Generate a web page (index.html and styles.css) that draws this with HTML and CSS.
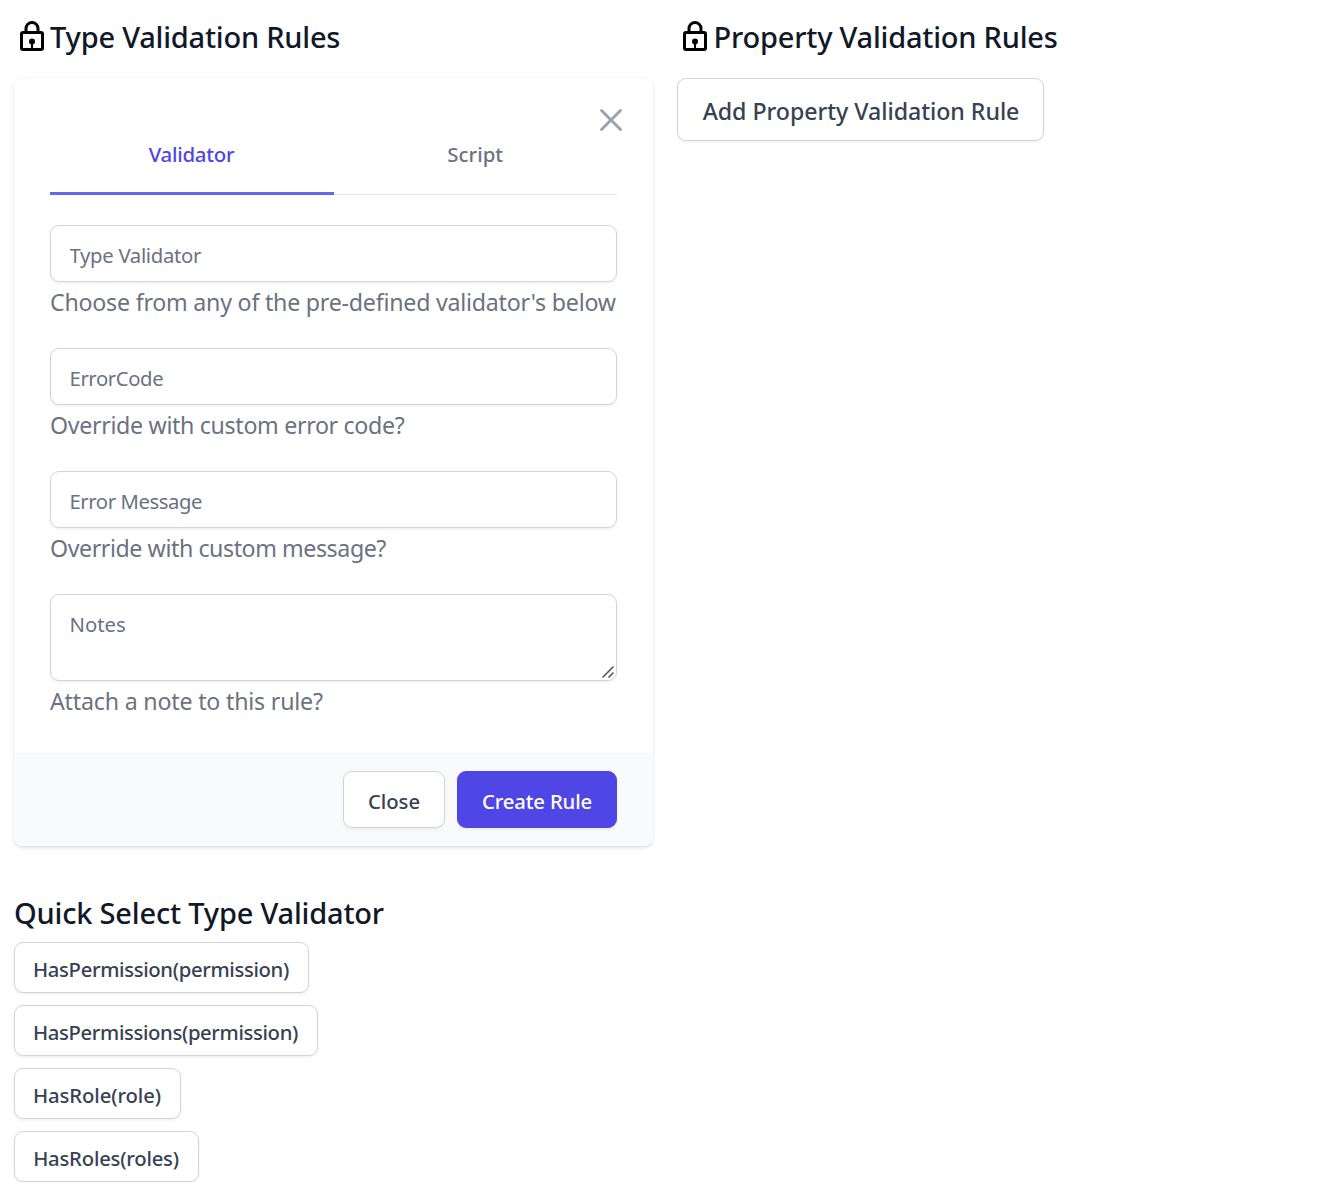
FILE: index.html
```html
<!DOCTYPE html>
<html lang="en">
<head>
<meta charset="utf-8">
<title>Validation Rules</title>
<link rel="stylesheet" href="styles.css">
</head>
<body>
<main class="columns">
  <section class="column">
    <h2 class="title title-type">
      <svg class="lock" viewBox="0 0 24 24" fill="none" stroke="#000" stroke-width="2"><rect x="5" y="9.6" width="14" height="11.4" rx="1"/><path d="M8 10V7a4 4 0 0 1 8 0v3"/><circle cx="12" cy="15.6" r="2" fill="#000" stroke="none"/><path d="M12 15.6v5" stroke-width="1.4"/></svg>
      <span>Type Validation Rules</span>
    </h2>
    <form class="card">
      <div class="card-body">
        <button type="button" class="dismiss" aria-label="Close">
          <svg viewBox="0 0 24 24" fill="none" stroke="currentColor" stroke-width="2" stroke-linecap="round"><path d="M5.7 5.7l12.6 12.6M18.3 5.7L5.7 18.3"/></svg>
        </button>
        <nav class="tabs">
          <a class="tab tab-active">Validator</a>
          <a class="tab">Script</a>
        </nav>
        <div class="field field-type">
          <input type="text" placeholder="Type Validator">
          <p class="help">Choose from any of the pre-defined validator's below</p>
        </div>
        <div class="field field-code">
          <input type="text" placeholder="ErrorCode">
          <p class="help">Override with custom error code?</p>
        </div>
        <div class="field field-message">
          <input type="text" placeholder="Error Message">
          <p class="help">Override with custom message?</p>
        </div>
        <div class="field field-notes">
          <div class="area">
            <textarea placeholder="Notes"></textarea>
            <svg class="grip" viewBox="0 0 12 12" fill="none" stroke="#505050" stroke-width="1.5"><path d="M.5 11.5l11-11M6.5 11.5l5-5"/></svg>
          </div>
          <p class="help">Attach a note to this rule?</p>
        </div>
      </div>
      <footer class="card-footer">
        <button type="button" class="btn btn-close">Close</button>
        <button type="button" class="btn btn-primary">Create Rule</button>
      </footer>
    </form>
    <h2 class="subtitle">Quick Select Type Validator</h2>
    <div class="quick">
      <button type="button" class="btn btn-small permission">HasPermission(permission)</button>
      <button type="button" class="btn btn-small permissions">HasPermissions(permission)</button>
      <button type="button" class="btn btn-small role">HasRole(role)</button>
      <button type="button" class="btn btn-small roles">HasRoles(roles)</button>
    </div>
  </section>
  <section class="column">
    <h2 class="title title-property">
      <svg class="lock" viewBox="0 0 24 24" fill="none" stroke="#000" stroke-width="2"><rect x="5" y="9.6" width="14" height="11.4" rx="1"/><path d="M8 10V7a4 4 0 0 1 8 0v3"/><circle cx="12" cy="15.6" r="2" fill="#000" stroke="none"/><path d="M12 15.6v5" stroke-width="1.4"/></svg>
      <span>Property Validation Rules</span>
    </h2>
    <button type="button" class="btn btn-large">Add Property Validation Rule</button>
  </section>
</main>
</body>
</html>
```
FILE: styles.css
```css
* { box-sizing: border-box; margin: 0; padding: 0; }
body {
  background: #fff;
  color: #111827;
  font-family: "Segoe UI", "Noto Sans", sans-serif;
  overflow: hidden;
}
svg { display: block; }
input, textarea, button { font-family: inherit; }

.columns {
  display: grid;
  grid-template-columns: 639.5px 639.5px;
  column-gap: 24px;
  padding: 18px 14px 0 13.5px;
}

.title {
  display: flex;
  align-items: center;
  height: 36px;
  margin-bottom: 24px;
  font-size: 29px;
  font-weight: 500;
  line-height: 36px;
  white-space: nowrap;
}
.title-type { letter-spacing: -0.22px; }
.title-property { letter-spacing: -0.22px; }
.lock { width: 36px; height: 36px; flex: none; }
.title span { padding: 1px 0 0 .6px; }

.card {
  overflow: hidden;
  border-radius: 9px;
  background: #fff;
  box-shadow: 0 1.5px 4.5px rgba(0, 0, 0, .08), 0 1.5px 3px rgba(0, 0, 0, .05);
}
.card-body {
  position: relative;
  height: 675px;
  padding: 36px 36px 0;
}
.dismiss {
  position: absolute;
  top: 24px;
  right: 24px;
  width: 36px;
  height: 36px;
  border: 0;
  background: none;
  color: #9ca3af;
}
.tabs {
  display: flex;
  height: 81px;
  margin-bottom: 30px;
  box-shadow: inset 0 -1px #e5e7eb;
}
.tab {
  flex: 1;
  padding-top: 25px;
  color: #6b7280;
  font-size: 20.4px;
  font-weight: 500;
  line-height: 30px;
  text-align: center;
}
.tab-active {
  flex: 0 0 284px;
  border-bottom: 3px solid #6366f1;
  color: #4f46e5;
  letter-spacing: -.28px;
}

.field { margin-bottom: 27px; }
.field input, .field textarea {
  display: block;
  width: 100%;
  height: 57px;
  padding: 3px 19px 0;
  border: 1px solid #d1d5db;
  border-radius: 9px;
  background: #fff;
  box-shadow: 0 1.5px 3px rgba(0, 0, 0, .05);
  font-size: 20.3px;
  line-height: 30px;
  letter-spacing: inherit;
}
.field textarea { height: 87px; padding-top: 14px; resize: none; }
.field ::placeholder { color: #6b7280; opacity: 1; }
.area { position: relative; }
.grip { position: absolute; right: 3px; bottom: 3px; width: 12px; height: 12px; }
.help {
  height: 39px;
  padding: 1.5px 0 0 .5px;
  color: #6b7280;
  font-size: 23.2px;
  line-height: 36px;
  white-space: nowrap;
}
.field-type { letter-spacing: -.3px; }
.field-type .help { letter-spacing: -.23px; }
.field-code { letter-spacing: -.4px; }
.field-code .help { letter-spacing: -.33px; }
.field-message { letter-spacing: -.43px; }
.field-notes .help { letter-spacing: -.2px; }

.card-footer {
  display: flex;
  justify-content: flex-end;
  gap: 12px;
  height: 93px;
  padding: 18px 36px;
  background: #f9fafb;
}
.btn {
  display: block;
  height: 57px;
  padding-top: 3px;
  border: 1px solid #d1d5db;
  border-radius: 9px;
  background: #fff;
  box-shadow: 0 1.5px 3px rgba(0, 0, 0, .05);
  color: #374151;
  font-size: 20.3px;
  font-weight: 500;
  white-space: nowrap;
}
.btn-close { width: 102px; }
.btn-primary {
  width: 160px;
  border-color: #4f46e5;
  background: #4f46e5;
  color: #fff;
  letter-spacing: -.15px;
}
.btn-large { width: 367px; height: 63px; padding-left: 1px; font-size: 23.2px; letter-spacing: -.05px; }

.subtitle {
  margin-top: 48px;
  padding: 1px 0 2px .5px;
  font-size: 29px;
  font-weight: 500;
  line-height: 36px;
  letter-spacing: -.19px;
}
.quick {
  display: flex;
  flex-direction: column;
  gap: 12px;
  padding-top: 9px;
}
.btn-small { height: 51px; }
.permission { width: 295px; letter-spacing: -.35px; }
.permissions { width: 304px; letter-spacing: -.37px; }
.role { width: 167px; letter-spacing: -.1px; }
.roles { width: 185px; letter-spacing: -.22px; }
```
